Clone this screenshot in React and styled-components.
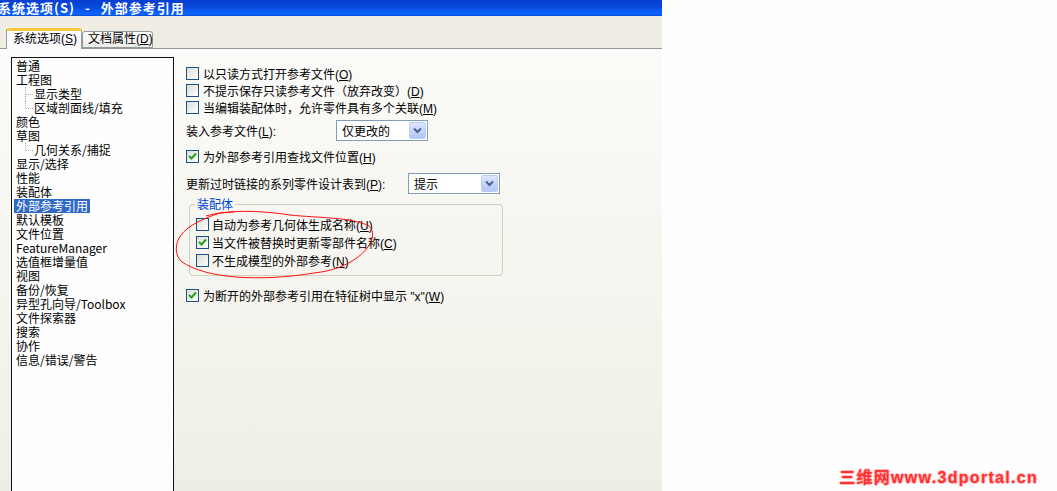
import styled, { createGlobalStyle } from 'styled-components'

const GlobalStyle = createGlobalStyle`
  html, body {
    margin: 0;
    padding: 0;
    background: #fdfefd;
  }
  body {
    font-family: "Liberation Sans", "Noto Sans CJK SC", sans-serif;
    font-size: 12px;
    color: #000;
  }
`

const treeItems = [
    { label: '普通' },
    { label: '工程图' },
    { label: '显示类型', child: true },
    { label: '区域剖面线/填充', child: true, last: true },
    { label: '颜色' },
    { label: '草图' },
    { label: '几何关系/捕捉', child: true, last: true },
    { label: '显示/选择' },
    { label: '性能' },
    { label: '装配体' },
    { label: '外部参考引用', selected: true },
    { label: '默认模板' },
    { label: '文件位置' },
    { label: 'FeatureManager' },
    { label: '选值框增量值' },
    { label: '视图' },
    { label: '备份/恢复' },
    { label: '异型孔向导/Toolbox' },
    { label: '文件探索器' },
    { label: '搜索' },
    { label: '协作' },
    { label: '信息/错误/警告' },
]

function CheckMark() {
    return (
        <svg width="9" height="9" viewBox="0 0 9 9">
            <polyline points="1,4 3.5,6.5 8,1.5" fill="none" stroke="#21a121" strokeWidth="2" />
        </svg>
    )
}

function Chevron() {
    return (
        <svg width="9" height="7" viewBox="0 0 9 7">
            <polyline points="1,1.5 4.5,5 8,1.5" fill="none" stroke="#4d6185" strokeWidth="2" />
        </svg>
    )
}

function Option({ checked, children, inGroup, top }) {
    return (
        <OptionRow $inGroup={inGroup} $top={top}>
            <Box>{checked && <CheckMark />}</Box>
            <span>{children}</span>
        </OptionRow>
    )
}

function Combo({ value, width }) {
    return (
        <ComboBox $width={width}>
            <ComboText>{value}</ComboText>
            <ComboButton>
                <Chevron />
            </ComboButton>
        </ComboBox>
    )
}

function App() {
    return (
        <Page>
            <GlobalStyle />
            <Dialog>
                <TitleBar>
                    <TitleText>系统选项(S) - 外部参考引用</TitleText>
                </TitleBar>
                <TabStrip>
                    <Tab $active>
                        系统选项(<Key>S</Key>)
                    </Tab>
                    <Tab>
                        文档属性(<Key>D</Key>)
                    </Tab>
                </TabStrip>
                <Panel>
                    <Tree>
                        {treeItems.map((item) => (
                            <TreeItem key={item.label} $child={item.child} $last={item.last}>
                                <TreeLabel $selected={item.selected}>{item.label}</TreeLabel>
                            </TreeItem>
                        ))}
                    </Tree>
                    <Options>
                        <Option>
                            以只读方式打开参考文件(<Key>O</Key>)
                        </Option>
                        <Option>
                            不提示保存只读参考文件（放弃改变）(<Key>D</Key>)
                        </Option>
                        <Option>
                            当编辑装配体时，允许零件具有多个关联(<Key>M</Key>)
                        </Option>
                        <ComboRow $top={4}>
                            <ComboLabel $width={150}>
                                装入参考文件(<Key>L</Key>):
                            </ComboLabel>
                            <Combo value="仅更改的" width={92} />
                        </ComboRow>
                        <Option checked top={7}>
                            为外部参考引用查找文件位置(<Key>H</Key>)
                        </Option>
                        <ComboRow $top={8}>
                            <ComboLabel $width={222}>
                                更新过时链接的系列零件设计表到(<Key>P</Key>):
                            </ComboLabel>
                            <Combo value="提示" width={92} />
                        </ComboRow>
                        <GroupBox>
                            <GroupLegend>装配体</GroupLegend>
                            <Option inGroup>
                                自动为参考几何体生成名称(<Key>U</Key>)
                            </Option>
                            <Option inGroup checked>
                                当文件被替换时更新零部件名称(<Key>C</Key>)
                            </Option>
                            <Option inGroup>
                                不生成模型的外部参考(<Key>N</Key>)
                            </Option>
                        </GroupBox>
                        <Option checked top={11}>
                            为断开的外部参考引用在特征树中显示 "x"(<Key>W</Key>)
                        </Option>
                    </Options>
                </Panel>
                <Scribble width="662" height="491" viewBox="0 0 662 491">
                    <path
                        d="M206 216 C226 210 258 210 290 215 C318 218 352 217 369 226 C377 234 371 247 358 257 C346 266 332 271 314 273 C290 277 262 279 236 277 C212 275 194 270 182 262 C174 255 175 243 181 235 C189 225 202 219 220 213 L234 212"
                        fill="none"
                        stroke="#ff1010"
                        strokeWidth="1"
                    />
                </Scribble>
            </Dialog>
            <Backdrop>
                <Watermark>三维网www.3dportal.cn</Watermark>
            </Backdrop>
        </Page>
    )
}

export default App

const Page = styled.div`
    display: flex;
    width: 1057px;
    height: 491px;
    overflow: hidden;
    background: #fdfefd;
`

const Dialog = styled.section`
    position: relative;
    width: 662px;
    height: 491px;
    flex: none;
    display: flex;
    flex-direction: column;
    background: #f0eee4;
    overflow: hidden;
`

const TitleBar = styled.header`
    height: 16px;
    flex: none;
    overflow: hidden;
    background: linear-gradient(#0a3ed2 0%, #0849dd 45%, #0a5cf3 70%, #0c64fb 90%, #0046d2 100%);
`

const TitleText = styled.span`
    display: block;
    margin-left: -2px;
    color: #fff;
    font-family: "Noto Sans CJK SC", sans-serif;
    font-weight: bold;
    font-size: 13px;
    line-height: 15px;
    letter-spacing: 1px;
    word-spacing: 6px;
    white-space: nowrap;
`

const TabStrip = styled.nav`
    height: 32px;
    flex: none;
    display: flex;
    align-items: flex-end;
    padding-left: 6px;
    position: relative;
    z-index: 1;
`

const Tab = styled.div`
    box-sizing: border-box;
    height: ${(p) => (p.$active ? '21px' : '17px')};
    width: ${(p) => (p.$active ? '76px' : '71px')};
    margin-bottom: ${(p) => (p.$active ? '-1px' : '0')};
    border: 1px solid #919b9c;
    border-bottom: ${(p) => (p.$active ? 'none' : '1px solid #919b9c')};
    border-top: ${(p) => (p.$active ? '3px solid #ffc83c' : '1px solid #919b9c')};
    border-radius: 3px 3px 0 0;
    background: ${(p) => (p.$active ? '#fcfcfe' : 'linear-gradient(#ffffff, #ecebe6)')};
    padding-left: ${(p) => (p.$active ? '6px' : '5px')};
    font-size: 12px;
    line-height: ${(p) => (p.$active ? '16px' : '15px')};
    white-space: nowrap;
`

const Key = styled.u`
    text-decoration: underline;
`

const Panel = styled.main`
    flex: 1;
    display: flex;
    align-items: flex-start;
    border-top: 1px solid #919b9c;
    padding: 8px 0 0 11px;
    background: linear-gradient(#fbfbf9, #f5f4ee 55%, #efeee6);
    overflow: hidden;
`

const Tree = styled.ul`
    box-sizing: border-box;
    width: 163px;
    height: 460px;
    flex: none;
    margin: 0;
    padding: 1px 0 0 4px;
    list-style: none;
    border: 1px solid #111;
    background: #fdfefd;
    font-family: "Noto Sans CJK SC", sans-serif;
    font-size: 12px;
`

const TreeItem = styled.li`
    position: relative;
    height: 14px;
    line-height: 14px;
    padding-left: ${(p) => (p.$child ? '18px' : '0')};
    white-space: nowrap;

    &::before {
        content: ${(p) => (p.$child ? "''" : 'none')};
        position: absolute;
        left: 9px;
        top: 0;
        height: ${(p) => (p.$last ? '7px' : '14px')};
        border-left: 1px dotted #b4b48c;
    }
    &::after {
        content: ${(p) => (p.$child ? "''" : 'none')};
        position: absolute;
        left: 10px;
        top: 7px;
        width: 7px;
        border-top: 1px dotted #b4b48c;
    }
`

const TreeLabel = styled.span`
    display: inline-block;
    height: 14px;
    margin-left: -2px;
    padding: 0 2px;
    background: ${(p) => (p.$selected ? '#316ac5' : 'transparent')};
    color: ${(p) => (p.$selected ? '#fff' : '#000')};
`

const Options = styled.div`
    display: flex;
    flex-direction: column;
    margin-left: 12px;
    padding-top: 8px;
`

const OptionRow = styled.div`
    display: flex;
    align-items: center;
    gap: ${(p) => (p.$inGroup ? '3px' : '4px')};
    height: ${(p) => (p.$inGroup ? '18px' : '17px')};
    margin-top: ${(p) => (p.$top ? `${p.$top}px` : '0')};
    padding-left: ${(p) => (p.$inGroup ? '6px' : '0')};
    white-space: nowrap;
`

const Box = styled.span`
    box-sizing: border-box;
    width: 13px;
    height: 13px;
    flex: none;
    display: flex;
    align-items: center;
    justify-content: center;
    border: 1px solid #1c5180;
    background: linear-gradient(135deg, #dcdcd7, #f4f4f1 70%, #ffffff);
`

const ComboRow = styled.div`
    display: flex;
    align-items: center;
    margin-top: ${(p) => `${p.$top}px`};
    white-space: nowrap;
`

const ComboLabel = styled.span`
    width: ${(p) => `${p.$width}px`};
    flex: none;
`

const ComboBox = styled.div`
    box-sizing: border-box;
    width: ${(p) => `${p.$width}px`};
    height: 21px;
    display: flex;
    align-items: center;
    justify-content: space-between;
    padding: 1px;
    border: 1px solid #7f9db9;
    background: #fff;
`

const ComboText = styled.span`
    padding-left: 4px;
    font-family: "Noto Sans CJK SC", sans-serif;
    font-size: 12px;
`

const ComboButton = styled.span`
    box-sizing: border-box;
    width: 17px;
    height: 17px;
    display: flex;
    align-items: center;
    justify-content: center;
    border: 1px solid #bccdf5;
    border-radius: 2px;
    background: linear-gradient(#dbe5fd, #c1d3fb 60%, #b2c6f6);
`

const GroupBox = styled.fieldset`
    box-sizing: border-box;
    width: 314px;
    margin: 3px 0 0 3px;
    padding: 4px 0 6px 0;
    border: 1px solid #d0d0bf;
    border-radius: 4px;
    min-inline-size: auto;
`

const GroupLegend = styled.legend`
    margin-left: 5px;
    padding: 0 2px;
    color: #0046d5;
    font-family: "Noto Sans CJK SC", sans-serif;
    font-size: 12px;
    line-height: 14px;
`

const Scribble = styled.svg`
    position: absolute;
    left: 0;
    top: 0;
    pointer-events: none;
`

const Backdrop = styled.div`
    flex: 1;
    display: flex;
    align-items: flex-end;
    justify-content: flex-end;
    padding: 0 19px 4px 0;
    background: #fdfefd;
`

const Watermark = styled.div`
    color: #ff3030;
    font-family: "Liberation Sans", "Noto Sans CJK SC", sans-serif;
    font-weight: bold;
    font-size: 16px;
    line-height: 18px;
    letter-spacing: 1.3px;
    white-space: nowrap;
    text-shadow: 1px 0 #fbb, -1px 0 #fbb, 0 1px #fbb, 0 -1px #fbb;
`
